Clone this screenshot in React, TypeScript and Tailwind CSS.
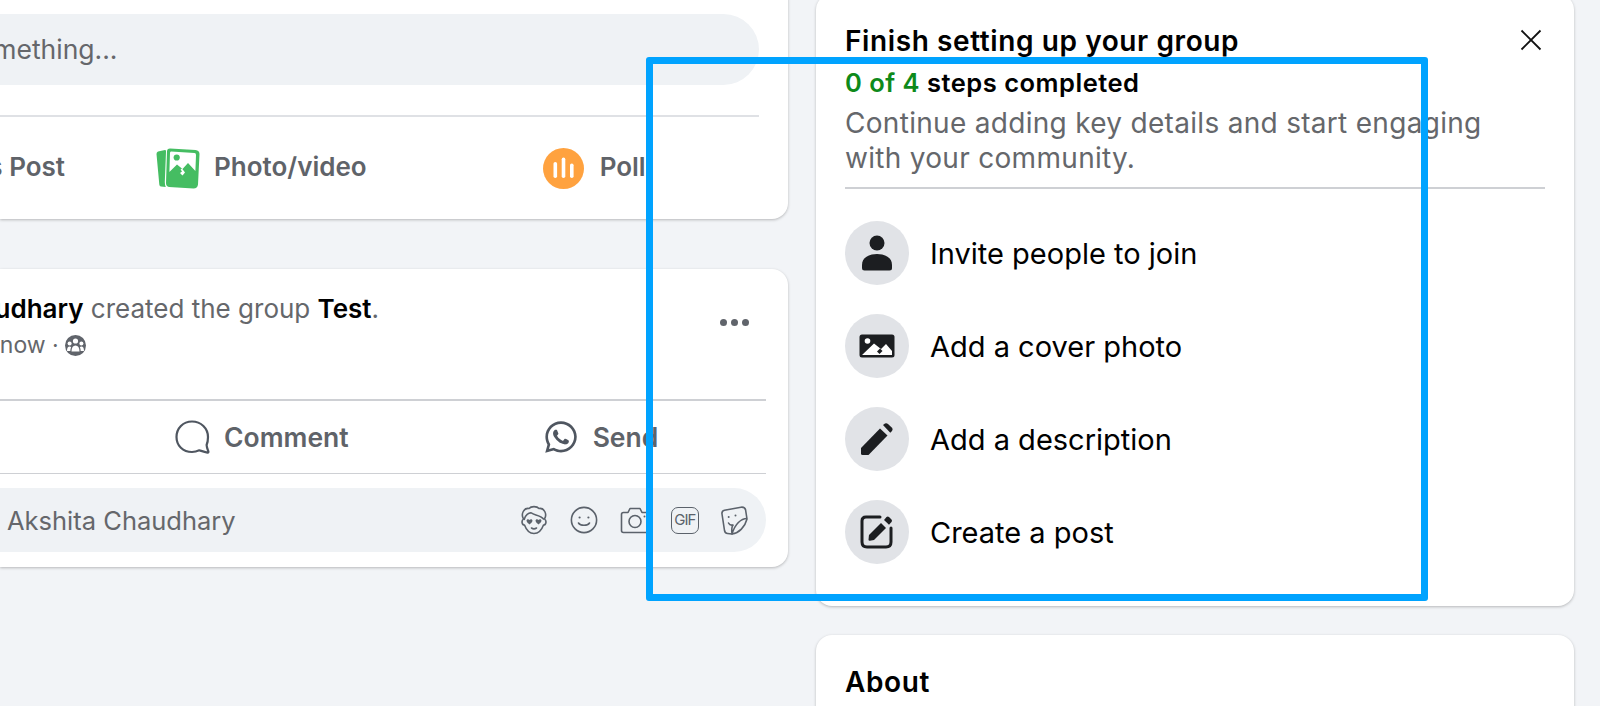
import { FaWhatsapp } from "react-icons/fa"

const fontFamily = "font-[family-name:Inter,'Liberation_Sans',sans-serif]"

function PhotoIcon() {
  return (
    <svg width="44" height="41" viewBox="0 0 44 41" className="shrink-0">
      <path d="M2 3.5 L9 2 Q10.5 2 10 4 L8.8 34 Q8.8 37 9.8 39 L5 38.5 Q3.5 38.5 3.3 36.5 L0.5 6 Q0.5 4 2 3.5Z" fill="#45bd62" />
      <path d="M14 0.5 L39.5 2 Q43.5 2.5 43.5 6 L42 36.5 Q41.5 40.5 37.5 40.5 L13 39 Q10 38.5 10 35 L11 3.5 Q11 0.5 14 0.5Z" fill="#45bd62" />
      <path d="M15 3.5 L38.5 5 Q40 5 40 7 L39.4 23 L32 15 L26.5 21 L21 16.5 L13.4 24 L14 5 Q14 3.5 15 3.5Z" fill="#fff" />
      <circle cx="20.7" cy="9.5" r="3.1" fill="#45bd62" />
      <path d="M26 20.5 L29 24.5 L26.5 27.5 L24 25 L26 23.5 L24.6 21.5Z" fill="#fff" />
    </svg>
  )
}

function PollIcon() {
  return (
    <svg width="41" height="41" viewBox="0 0 41 41" className="shrink-0">
      <circle cx="20.5" cy="20.5" r="20.5" fill="#ffa23f" />
      <rect x="10.5" y="14" width="3.6" height="16" rx="1.8" fill="#fff" />
      <rect x="18.7" y="9.5" width="3.6" height="20.5" rx="1.8" fill="#fff" />
      <rect x="27" y="15.5" width="3.6" height="14.5" rx="1.8" fill="#fff" />
    </svg>
  )
}

function CommentIcon() {
  return (
    <svg width="35" height="34" viewBox="0 0 35 34" fill="none" className="shrink-0">
      <path
        d="M17 1.5 C8 1.5 1.5 8.3 1.5 17 C1.5 25.7 8 32 17 32 C20 32 22 31.4 24.3 30.3 C26.5 31 30 32.2 32.5 32.6 C33.4 32.7 33.6 32 33.3 31.3 C32.6 29.5 31.7 27.3 31.6 25 C32.5 22.8 33 20 33 17 C33 8.3 26 1.5 17 1.5Z"
        stroke="#4f5660"
        strokeWidth="2.2"
        strokeLinejoin="round"
      />
    </svg>
  )
}

function GroupGlyph() {
  return (
    <svg width="21" height="21" viewBox="0 0 21 21" className="shrink-0">
      <circle cx="10.5" cy="10.5" r="10.5" fill="#60646b" />
      <circle cx="10.5" cy="6" r="2.6" fill="#fff" />
      <circle cx="4.6" cy="8.6" r="2" fill="#fff" />
      <circle cx="16.4" cy="8.6" r="2" fill="#fff" />
      <path d="M6.5 16.5 C6.5 12.5 8 10.4 10.5 10.4 C13 10.4 14.5 12.5 14.5 16.5Z" fill="#fff" />
      <path d="M2 16 C2 13 3 11.6 4.6 11.6 C5.3 11.6 5.8 11.8 6.1 12.2 C5.6 13.4 5.3 14.6 5.3 16Z" fill="#fff" />
      <path d="M19 16 C19 13 18 11.6 16.4 11.6 C15.7 11.6 15.2 11.8 14.9 12.2 C15.4 13.4 15.7 14.6 15.7 16Z" fill="#fff" />
    </svg>
  )
}

function AvatarSticker() {
  return (
    <svg width="30" height="30" viewBox="0 0 30 30" fill="none" stroke="#5b626b" strokeWidth="1.6" className="shrink-0">
      <path d="M4.5 14 C1.5 9 5 2.5 10 3.5 C12 1 18 1 20 3.5 C25 2.5 28.5 9 25.5 14 C28 16 27 20 24.5 20 C22.5 25.5 19 28.5 15 28.5 C11 28.5 7.5 25.5 5.5 20 C3 20 2 16 4.5 14Z" strokeLinejoin="round" />
      <path d="M5 15 C6 10 10 7.5 12.5 8 C15 10.5 21 9.5 25 14.5" />
      <path d="M10.5 15 C11.8 13.6 13.5 14.4 13.5 15.8 C13.5 17.2 11.2 19 10.5 19.4 C9.8 19 7.5 17.2 7.5 15.8 C7.5 14.4 9.2 13.6 10.5 15Z" fill="#5b626b" stroke="none" />
      <path d="M19.5 15 C20.8 13.6 22.5 14.4 22.5 15.8 C22.5 17.2 20.2 19 19.5 19.4 C18.8 19 16.5 17.2 16.5 15.8 C16.5 14.4 18.2 13.6 19.5 15Z" fill="#5b626b" stroke="none" />
      <path d="M12.5 23 C14 24 16 24 17.5 23" strokeLinecap="round" />
    </svg>
  )
}

function SmileIcon() {
  return (
    <svg width="28" height="28" viewBox="0 0 28 28" fill="none" stroke="#5b626b" strokeWidth="1.6" className="shrink-0">
      <circle cx="14" cy="14" r="12.6" />
      <circle cx="9.6" cy="11.5" r="1.1" fill="#5b626b" stroke="none" />
      <circle cx="18.4" cy="11.5" r="1.1" fill="#5b626b" stroke="none" />
      <path d="M8.5 17 C10.5 20 17.5 20 19.5 17" strokeLinecap="round" />
    </svg>
  )
}

function CameraIcon() {
  return (
    <svg width="30" height="27" viewBox="0 0 30 27" fill="none" stroke="#5b626b" strokeWidth="1.6" className="shrink-0">
      <path d="M3.5 5.5 H8 L10 1.5 H20 L22 5.5 H26.5 Q28.5 5.5 28.5 7.5 V23.5 Q28.5 25.5 26.5 25.5 H3.5 Q1.5 25.5 1.5 23.5 V7.5 Q1.5 5.5 3.5 5.5Z" strokeLinejoin="round" />
      <circle cx="15" cy="14.5" r="6" />
      <circle cx="24.5" cy="9.5" r="1" fill="#5b626b" stroke="none" />
    </svg>
  )
}

function GifIcon() {
  return (
    <div className="flex h-[27px] w-[28px] shrink-0 items-center justify-center rounded-[7px] border-[1.6px] border-[#5b626b] text-[15px] tracking-[-1px] text-[#5b626b]">
      GIF
    </div>
  )
}

function StickerIcon() {
  return (
    <svg width="28" height="29" viewBox="0 0 28 29" fill="none" stroke="#5b626b" strokeWidth="1.6" className="shrink-0">
      <path d="M2 8 Q1.5 5 4.5 4.2 L21 1.2 Q25 0.8 25.6 4 L27 13 C25 21 19 27 12 28 L7.5 27.5 Q5 27.2 4.5 24.5Z" strokeLinejoin="round" />
      <path d="M27 12.5 C21 12.5 15 18 12 28 C11.5 24 11.5 21 13 19" strokeLinejoin="round" />
      <circle cx="8.7" cy="11" r="1" fill="#5b626b" stroke="none" />
      <circle cx="15.5" cy="9.5" r="1" fill="#5b626b" stroke="none" />
      <path d="M8.5 17 C9.5 19 11 19.5 13 19" strokeLinecap="round" />
    </svg>
  )
}

function PersonIcon() {
  return (
    <svg width="32" height="36" viewBox="0 0 32 36" fill="#1c1e21">
      <circle cx="16" cy="8" r="7.5" />
      <path d="M1 30 C1 23 7 19 16 19 C25 19 31 23 31 30 V33 Q31 35.5 28.5 35.5 H3.5 Q1 35.5 1 33Z" />
    </svg>
  )
}

function CoverIcon() {
  return (
    <svg width="36" height="24" viewBox="0 0 36 24">
      <rect x="0.5" y="0.5" width="35" height="23" rx="2.5" fill="#1c1e21" />
      <circle cx="8.5" cy="7" r="2.8" fill="#fff" />
      <path d="M3 21 L15 9.5 L22 15 L27 10 L33 17 V21Z" fill="#fff" />
      <path d="M21 14.5 L23.5 17 L20.5 20 L18 17.5Z" fill="#1c1e21" />
    </svg>
  )
}

function PencilIcon() {
  return (
    <svg width="34" height="34" viewBox="0 0 34 34" fill="#1c1e21">
      <path d="M1 26 L20 6.5 L27.5 13.5 L8.5 33 H2.5 Q1 33 1 31.5Z" />
      <path d="M23 3 L25 1.5 Q26.5 0.7 28 2 L32 5.8 Q33.3 7.2 32 9 L30.3 10.8Z" />
    </svg>
  )
}

function EditIcon() {
  return (
    <svg width="34" height="35" viewBox="0 0 34 35" fill="none">
      <path d="M20 3 H6 Q2 3 2 7 V28 Q2 33 7 33 H26 Q31 33 31 28 V14" stroke="#1c1e21" strokeWidth="3" strokeLinecap="round" />
      <path d="M9 21 L21 9 L26 14 L14 26 L9.8 26.8 Q8.4 26.8 8.5 25.4Z" fill="#1c1e21" />
      <path d="M24 6 L26.5 3 Q27.7 2 29 3 L31.5 5.5 Q32.6 6.7 31.5 8 L29 10.8Z" fill="#1c1e21" />
    </svg>
  )
}

const steps = [
  { label: "Invite people to join", icon: PersonIcon },
  { label: "Add a cover photo", icon: CoverIcon },
  { label: "Add a description", icon: PencilIcon },
  { label: "Create a post", icon: EditIcon },
]

export default function App() {
  return (
    <div className={`relative flex h-[706px] w-[1600px] gap-[28px] overflow-hidden bg-[#f2f4f7] ${fontFamily}`}>
      {/* Left column, clipped by the window edge */}
      <div className="flex w-[788px] shrink-0 flex-col gap-[50px]">
        {/* Composer */}
        <div className="-mt-[16px] h-[235px] shrink-0 rounded-r-2xl bg-white pt-[30px] shadow-[0_1px_3px_rgba(0,0,0,0.25)]">
          <div className="-ml-[200px] mr-[29px] flex h-[71px] items-center rounded-full bg-[#eff2f5] pl-[90px] text-[26.5px] whitespace-nowrap text-[#65676b]">
            Write something...
          </div>
          <div className="mt-[30px] mr-[29px] h-[1.5px] bg-[#dfe1e5]" />
          <div className="flex h-[103px] items-center text-[26px] font-semibold text-[#5f6369]">
            <div className="mb-[4px] flex w-[65px] justify-end whitespace-nowrap">Anonymous Post</div>
            <div className="ml-[91px] flex items-center gap-[14px]">
              <PhotoIcon />
              <span className="mb-[4px]">Photo/video</span>
            </div>
            <div className="ml-[176px] flex items-center gap-[16px]">
              <PollIcon />
              <span className="mb-[4px]">Poll</span>
            </div>
          </div>
        </div>

        {/* Post */}
        <div className="flex h-[298px] shrink-0 flex-col rounded-r-2xl bg-white shadow-[0_1px_3px_rgba(0,0,0,0.25)]">
          <div className="flex h-[130px] justify-between pt-[25px] pr-[39px]">
            <div className="-ml-[157px] whitespace-nowrap">
              <div className="text-[26px] leading-[30px] text-[#65676b]">
                <span className="font-semibold text-black">Akshita Chaudhary</span> created the group{" "}
                <span className="font-semibold text-black">Test</span>.
              </div>
              <div className="mt-[7px] flex items-center gap-[6px] pl-[104px] text-[23px] leading-[28px] text-[#65676b]">
                Just now · <GroupGlyph />
              </div>
            </div>
            <div className="mt-[25px] flex gap-[4px]">
              <span className="h-[7px] w-[7px] rounded-full bg-[#60646b]" />
              <span className="h-[7px] w-[7px] rounded-full bg-[#60646b]" />
              <span className="h-[7px] w-[7px] rounded-full bg-[#60646b]" />
            </div>
          </div>
          <div className="mr-[22px] h-[1.5px] bg-[#ced0d4]" />
          <div className="flex h-[72px] items-center pl-[175px] text-[26.5px] font-semibold text-[#5f6369]">
            <div className="flex items-center gap-[14px]">
              <CommentIcon />
              <span className="mt-[2px]">Comment</span>
            </div>
            <div className="ml-[194px] flex items-center gap-[14px]">
              <FaWhatsapp className="h-[36px] w-[36px] text-[#4f5660]" />
              <span className="mt-[2px]">Send</span>
            </div>
          </div>
          <div className="mr-[22px] h-[1.5px] bg-[#ced0d4]" />
          <div className="-ml-[200px] mt-[14px] mr-[22px] flex h-[64px] items-center justify-between rounded-full bg-[#eff2f5] pr-[18px] pl-[48px] text-[25.5px] whitespace-nowrap text-[#65676b]">
            <span className="mt-[2px]">Comment as Akshita Chaudhary</span>
            <div className="flex w-[229px] items-center justify-between">
              <AvatarSticker />
              <SmileIcon />
              <CameraIcon />
              <GifIcon />
              <StickerIcon />
            </div>
          </div>
        </div>
      </div>

      {/* Right column */}
      <div className="flex w-[758px] shrink-0 flex-col gap-[29px]">
        <div className="-mt-[6px] flex h-[612px] shrink-0 flex-col rounded-2xl bg-white px-[29px] pt-[29px] shadow-[0_1px_3px_rgba(0,0,0,0.25)]">
          <div className="flex h-[36px] items-center justify-between">
            <h2 className="text-[28px] leading-[36px] font-semibold tracking-[0.6px] text-black">Finish setting up your group</h2>
            <svg width="22" height="22" viewBox="0 0 22 22" fill="none" stroke="#111" strokeWidth="1.8" className="mr-[3px] -mt-[3px]">
              <path d="M1.5 1.5 L20.5 20.5 M20.5 1.5 L1.5 20.5" />
            </svg>
          </div>
          <p className="mt-[9px] text-[25.5px] leading-[30px] font-semibold tracking-[0.5px] text-black">
            <span className="text-[#0e8a1a]">0 of 4</span> steps completed
          </p>
          <p className="mt-[8px] w-[670px] text-[28px] leading-[35px] tracking-[0.3px] text-[#65676b]">
            Continue adding key details and start engaging with your community.
          </p>
          <div className="mt-[11px] h-[1.5px] bg-[#ced0d4]" />
          <div className="mt-[32px] flex flex-col gap-[29px]">
            {steps.map((step) => {
              const Icon = step.icon
              return (
                <div key={step.label} className="flex items-center gap-[21px]">
                  <div className="flex h-[64px] w-[64px] items-center justify-center rounded-full bg-[#e1e3e7]">
                    <Icon />
                  </div>
                  <span className="mt-[2px] text-[29px] text-black">{step.label}</span>
                </div>
              )
            })}
          </div>
        </div>
        <div className="h-[120px] shrink-0 rounded-2xl bg-white px-[29px] pt-[29px] shadow-[0_1px_3px_rgba(0,0,0,0.25)]">
          <h2 className="text-[28px] leading-[36px] font-semibold tracking-[0.6px] text-black">About</h2>
        </div>
      </div>

      {/* Blue annotation frame over the screenshot */}
      <div className="pointer-events-none absolute top-[57px] left-[646px] h-[544px] w-[782px] rounded-[3px] border-[7px] border-[#00a3ff]" />
    </div>
  )
}
